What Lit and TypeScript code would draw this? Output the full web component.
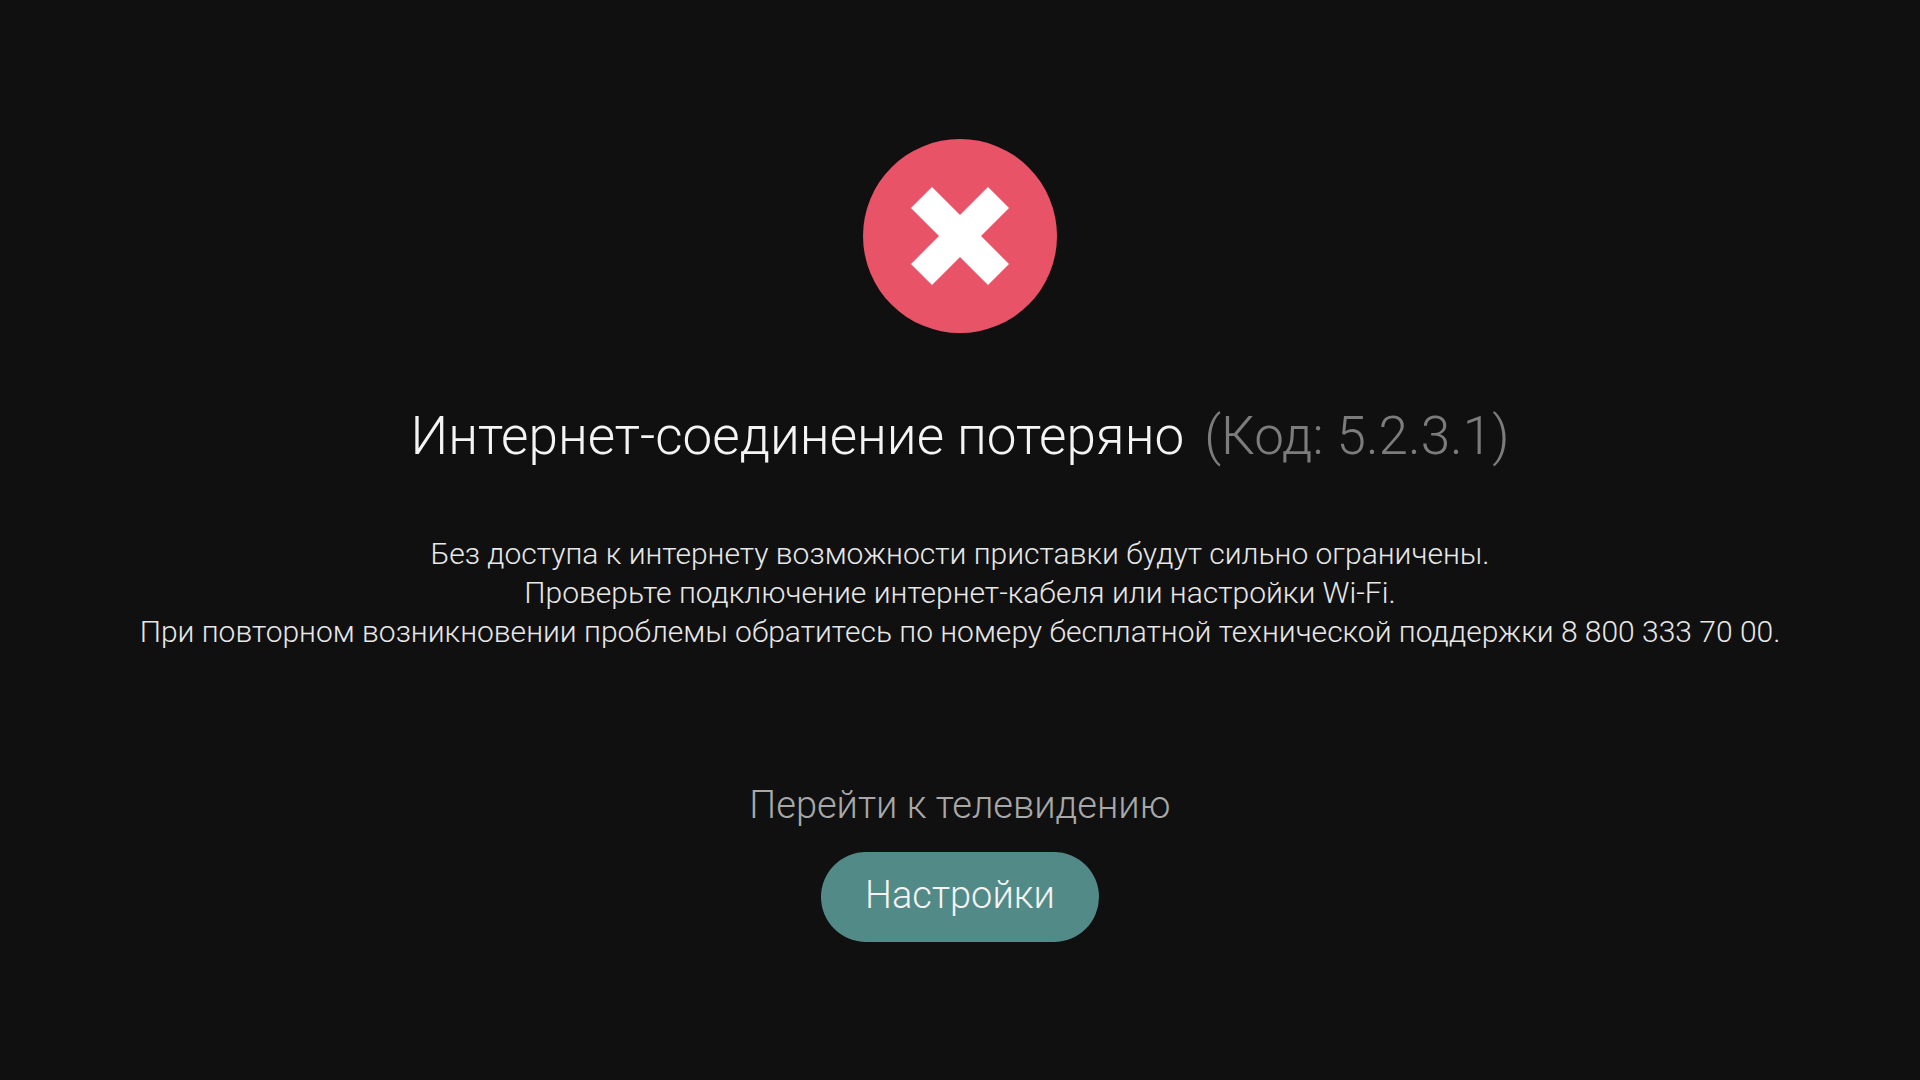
import { LitElement, html, css } from "lit";
import { customElement } from "lit/decorators.js";

@customElement("app-root")
export class AppRoot extends LitElement {
  static styles = css`
    :host {
      display: block;
      min-height: 100vh;
      background: #101010;
      color: #f4f4f4;
      font-family: Roboto, "Liberation Sans", sans-serif;
      font-weight: 300;
    }
    .screen {
      box-sizing: border-box;
      min-height: 100vh;
      padding: 139px 24px;
      display: flex;
      flex-direction: column;
      align-items: center;
      text-align: center;
    }
    .status {
      display: block;
      width: 194px;
      height: 194px;
    }
    .title {
      margin: 69px 0 0;
      font-size: 53px;
      line-height: 68px;
      font-weight: 300;
      display: flex;
      flex-wrap: wrap;
      justify-content: center;
      gap: 0 20px;
    }
    .code {
      color: #7c7c7c;
    }
    .message {
      margin: 64px 0 0;
      font-size: 30px;
      line-height: 39px;
      color: #e8e8e8;
    }
    .line {
      display: block;
    }
    .actions {
      margin-top: 111px;
      display: flex;
      flex-direction: column;
      align-items: center;
    }
    .button {
      border: 0;
      border-radius: 45px;
      padding: 0 44px 4px;
      font: inherit;
      font-size: 38px;
      line-height: 86px;
      background: transparent;
      color: #a8a8a8;
      cursor: pointer;
    }
    .primary {
      background: #528a87;
      color: #f4f4f4;
    }
  `;

  render() {
    return html`
      <main class="screen">
        <svg class="status" viewBox="0 0 194 194" aria-hidden="true">
          <circle cx="97" cy="97" r="97" fill="#e85367" />
          <path
            d="M69 48L97 76L125 48L146 69L118 97L146 125L125 146L97 118L69 146L48 125L76 97L48 69Z"
            fill="#fff"
          />
        </svg>
        <h1 class="title">
          <span>Интернет-соединение потеряно</span>
          <span class="code">(Код: 5.2.3.1)</span>
        </h1>
        <p class="message">
          <span class="line">Без доступа к интернету возможности приставки будут сильно ограничены.</span>
          <span class="line">Проверьте подключение интернет-кабеля или настройки Wi-Fi.</span>
          <span class="line">При повторном возникновении проблемы обратитесь по номеру бесплатной технической поддержки 8 800 333 70 00.</span>
        </p>
        <div class="actions">
          <button class="button" type="button">Перейти к телевидению</button>
          <button class="button primary" type="button">Настройки</button>
        </div>
      </main>
    `;
  }
}
